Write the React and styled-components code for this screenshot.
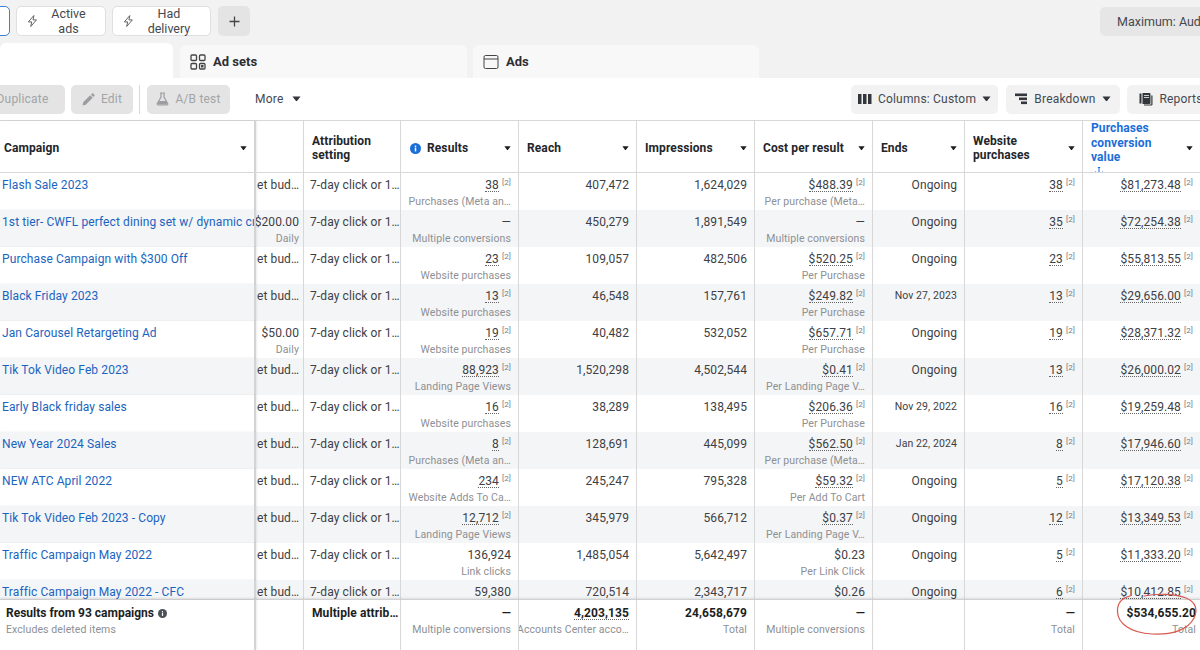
import React from "react";
import styled, { createGlobalStyle } from "styled-components";

const GlobalStyle = createGlobalStyle`
  html, body {
    margin: 0;
    padding: 0;
    width: 1200px;
    height: 650px;
    overflow: hidden;
    background: #fff;
    font-family: Roboto, "Liberation Sans", sans-serif;
    color: #1c1e21;
  }
  * { box-sizing: border-box; }
`;

const COLS = "256px 48px 97px 118px 118px 118px 118px 92px 118px 117px";

const Page = styled.div`
  position: relative;
  display: flex;
  flex-direction: column;
  width: 1200px;
  height: 650px;
  overflow: hidden;
`;

const TopArea = styled.div`
  display: flex;
  flex-direction: column;
  height: 78px;
  background: #f2f2f2;
`;

const FilterBar = styled.div`
  display: flex;
  align-items: center;
  gap: 6px;
  height: 45px;
  padding-bottom: 3px;
  margin-left: -40px;
`;

const FilterChip = styled.button`
  display: flex;
  align-items: center;
  gap: 4px;
  height: 30px;
  padding: 0 10px;
  border-radius: 5px;
  border: 1px solid ${(p) => (p.$selected ? "#3b82d6" : "#dddfe2")};
  background: #fff;
  font: 400 12.5px Roboto, sans-serif;
  color: #444950;
  width: ${(p) => p.$width}px;
`;

const PlusButton = styled.button`
  display: flex;
  align-items: center;
  justify-content: center;
  width: 32px;
  height: 30px;
  margin-left: 1px;
  border: none;
  border-radius: 5px;
  background: #e4e4e4;
  color: #444950;
`;

const MaxButton = styled.button`
  display: flex;
  align-items: center;
  gap: 7px;
  height: 29px;
  width: 130px;
  margin-left: auto;
  margin-right: -30px;
  padding: 0 10px;
  border: none;
  border-radius: 5px;
  background: #e6e6e6;
  font: 400 12.5px Roboto, sans-serif;
  color: #444950;
  white-space: nowrap;
`;

const TabBar = styled.div`
  display: flex;
  align-items: flex-end;
  height: 33px;
  gap: 6px;
`;

const Tab = styled.div`
  display: flex;
  align-items: center;
  gap: 7px;
  height: ${(p) => (p.$active ? 35 : 33)}px;
  width: ${(p) => p.$width}px;
  padding-left: 10px;
  margin-right: ${(p) => (p.$active ? 1 : 0)}px;
  border-radius: 6px 6px 0 0;
  background: ${(p) => (p.$active ? "#fff" : "#f8f8f8")};
  font-size: 13px;
  font-weight: 700;
  color: #2c2e33;
`;

const Toolbar = styled.div`
  display: flex;
  align-items: center;
  height: 43px;
  background: #fff;
  border-bottom: 1px solid #d8d8d8;
`;

const ToolButton = styled.button`
  display: flex;
  align-items: center;
  justify-content: center;
  gap: 6px;
  height: 29px;
  width: ${(p) => p.$width}px;
  margin-right: ${(p) => p.$gap ?? 6}px;
  border: none;
  border-radius: 5px;
  background: ${(p) => (p.$disabled ? "#e4e4e4" : "#f2f2f2")};
  font: 400 12px Roboto, sans-serif;
  letter-spacing: 0.2px;
  color: ${(p) => (p.$disabled ? "#a2a4a7" : "#444950")};
  white-space: nowrap;
  flex-shrink: 0;
`;

const ToolDivider = styled.div`
  width: 1px;
  height: 29px;
  margin-right: 7px;
  background: #d8d8d8;
`;

const MoreLabel = styled.div`
  display: flex;
  align-items: center;
  gap: 9px;
  margin-left: 19px;
  font-size: 12px;
  letter-spacing: 0.2px;
  color: #444950;
`;

const ToolRight = styled.div`
  display: flex;
  align-items: center;
  margin-left: auto;
  margin-right: -30px;
`;

const Row = styled.div`
  display: grid;
  grid-template-columns: ${COLS};
  flex-shrink: 0;
  height: ${(p) => p.$height}px;
  background: ${(p) => (p.$grey ? "#f4f5f6" : "#fff")};
`;

const HeadCell = styled.div`
  display: flex;
  align-items: center;
  gap: 6px;
  padding: 0 7px 0 ${(p) => p.$pad ?? 8}px;
  border-right: 1px solid #d8d8d8;
  font-size: 12px;
  font-weight: 700;
  line-height: 14.5px;
  letter-spacing: 0.1px;
  color: ${(p) => (p.$active ? "#1a6ed8" : "#23252a")};
  &:last-child { border-right: none; }
`;

const HeadLabel = styled.div`
  flex: 1;
  min-width: 0;
`;

const Divider = styled.div`
  height: 1px;
  background: #d8d8d8;
  flex-shrink: 0;
`;

const Body = styled.div`
  display: flex;
  flex-direction: column;
  height: 426px;
  overflow: hidden;
`;

const Cell = styled.div`
  display: flex;
  flex-direction: column;
  align-items: ${(p) => (p.$left ? "flex-start" : "flex-end")};
  padding: 5px 7px 0 ${(p) => p.$pad ?? 4}px;
  border-right: 1px solid #d8d8d8;
  min-width: 0;
  white-space: nowrap;
  overflow: hidden;
  &:last-child { border-right: none; }
`;

const FrozenCell = styled(Cell)`
  border-right: 2px solid #d4d4d4;
  box-shadow: 1px 0 2px rgba(0, 0, 0, 0.08);
`;

const FrozenHead = styled(HeadCell)`
  border-right: 2px solid #d4d4d4;
  box-shadow: 1px 0 2px rgba(0, 0, 0, 0.08);
`;

const CampaignLink = styled.span`
  font-size: 12px;
  line-height: 14px;
  letter-spacing: 0.1px;
  color: #1a64c0;
`;

const Value = styled.div`
  display: flex;
  align-items: flex-start;
  gap: 3px;
  font-size: ${(p) => (p.$small ? 10.5 : 12)}px;
  line-height: 14px;
  letter-spacing: 0.1px;
  font-weight: ${(p) => (p.$bold ? 700 : 400)};
  color: ${(p) => (p.$bold ? "#1c1e21" : "#3d4045")};
`;

const Dotted = styled.span`
  border-bottom: 1px dotted #666;
  line-height: 12px;
  margin-top: 1px;
`;

const Note = styled.sup`
  font-size: 8px;
  line-height: 10px;
  color: #77797d;
  vertical-align: baseline;
`;

const SubText = styled.div`
  margin-top: 3px;
  font-size: 10.5px;
  line-height: 13px;
  letter-spacing: 0.1px;
  color: #8d9094;
`;

const Footer = styled.div`
  display: grid;
  grid-template-columns: ${COLS};
  height: 51px;
  background: #fff;
  border-top: 1px solid #d0d0d0;
  box-shadow: 0 -1px 2px rgba(0, 0, 0, 0.1);
  position: relative;
`;

const FootTitle = styled.div`
  display: flex;
  align-items: center;
  gap: 4px;
  font-size: 12px;
  font-weight: 700;
  line-height: 14px;
  color: #1c1e21;
`;

const RedCircle = styled.svg`
  position: absolute;
  left: 1110px;
  top: 590px;
  width: 90px;
  height: 50px;
  pointer-events: none;
`;

const Caret = ({ color = "#1c1e21", size = 7 }) => (
  <svg width={size} height={size * 0.6} viewBox="0 0 10 6" style={{ flexShrink: 0 }}>
    <path d="M0.5 0.5h9L5.8 5.3a1 1 0 0 1-1.6 0z" fill={color} />
  </svg>
);

const Bolt = () => (
  <svg width="12" height="14" viewBox="0 0 12 14" fill="none" stroke="#555" strokeWidth="1" strokeLinejoin="round">
    <path d="M7.5 1 1.5 8h3.6l-1 5 6.2-7.2H6.6z" />
  </svg>
);

const GridIcon = () => (
  <svg width="16" height="16" viewBox="0 0 16 16" fill="none" stroke="#444" strokeWidth="1.3">
    <rect x="1" y="1" width="5.5" height="5.5" rx="1" />
    <rect x="9.5" y="1" width="5.5" height="5.5" rx="1" />
    <rect x="1" y="9.5" width="5.5" height="5.5" rx="1" />
    <rect x="9.5" y="9.5" width="5.5" height="5.5" rx="1" />
    <rect x="11" y="11" width="2.5" height="2.5" fill="#444" stroke="none" />
  </svg>
);

const AdIcon = () => (
  <svg width="16" height="16" viewBox="0 0 16 16" fill="none" stroke="#444" strokeWidth="1">
    <rect x="1" y="1.5" width="14" height="13" rx="1.5" />
    <path d="M1 5h14" />
  </svg>
);

const TableIcon = () => (
  <svg width="14" height="14" viewBox="0 0 14 14" fill="none" stroke="#444" strokeWidth="1.2">
    <rect x="1" y="1.5" width="12" height="11" rx="2" />
    <path d="M1 5h12M1 8.5h12M5 5v7.5M9 5v7.5" />
    <path d="M1 3.5h12" strokeWidth="2.5" />
  </svg>
);

const PencilIcon = () => (
  <svg width="13" height="13" viewBox="0 0 13 13" fill="#9b9da0">
    <path d="M0.5 12.5l.7-3.2 7-7 2.5 2.5-7 7zM9 1.6l1-1a1 1 0 0 1 1.300 0l1.100 1.100a1 1 0 0 1 0 1.300l-1 1z" />
  </svg>
);

const FlaskIcon = () => (
  <svg width="13" height="14" viewBox="0 0 13 14" fill="none" stroke="#9b9da0" strokeWidth="1.200">
    <path d="M4 1h5M5 1v4L1.300 11.500a1 1 0 0 0 .9 1.500h8.600a1 1 0 0 0 .9-1.500L8 5V1" />
    <path d="M3 9h7l1.500 3.500h-10z" fill="#9b9da0" stroke="none" />
  </svg>
);

const ColumnsIcon = () => (
  <svg width="14" height="12" viewBox="0 0 14 12" fill="#33363b">
    <rect x="0" y="1" width="3.500" height="10" />
    <rect x="5" y="1" width="3.500" height="10" />
    <rect x="10" y="1" width="3.500" height="10" />
  </svg>
);

const BreakdownIcon = () => (
  <svg width="13" height="12" viewBox="0 0 13 12" fill="#33363b">
    <rect x="0" y="0.500" width="12" height="2.600" />
    <rect x="4" y="4.500" width="8" height="2.600" />
    <rect x="6" y="8.500" width="6" height="2.600" />
  </svg>
);

const ReportsIcon = () => (
  <svg width="14" height="14" viewBox="0 0 14 14" fill="#33363b">
    <path d="M0.500 1.500h2v10h-2zM3.500 1h7a1 1 0 0 1 1 1v9a1 1 0 0 1-1 1h-7z" />
    <path d="M12.300 3.500h1.200v9a1 1 0 0 1-1 1H5v-1h7.300z" />
    <path d="M5 3.500h5M5 5.500h5" stroke="#f2f2f2" strokeWidth="0.800" />
  </svg>
);

const InfoIcon = ({ color, size = 11 }) => (
  <svg width={size} height={size} viewBox="0 0 12 12" style={{ flexShrink: 0 }}>
    <circle cx="6" cy="6" r="6" fill={color} />
    <rect x="5.200" y="5" width="1.600" height="4.200" fill="#fff" />
    <rect x="5.200" y="2.800" width="1.600" height="1.500" fill="#fff" />
  </svg>
);

const SortArrow = () => (
  <svg width="10" height="10" viewBox="0 0 10 10" fill="none" stroke="#1a6ed8" strokeWidth="1" style={{ display: "block", marginLeft: 3, marginTop: 1 }}>
    <path d="M5 1.500v7M1.500 5.500c0 2 1.500 3 3.500 3s3.500-1 3.500-3M3.800 1.500h2.400" />
  </svg>
);

const headers = [
  { label: "Attribution setting", pad: 8 },
  { label: "Results", pad: 9, info: true },
  { label: "Reach" },
  { label: "Impressions" },
  { label: "Cost per result" },
  { label: "Ends" },
  { label: "Website purchases" },
];

const rows = [
  { name: "Flash Sale 2023", res: "38", resSub: "Purchases (Meta an…", reach: "407,472", imp: "1,624,029", cost: "$488.39", costSub: "Per purchase (Meta…", ends: "Ongoing", web: "38", value: "$81,273.48" },
  { name: "1st tier- CWFL perfect dining set w/ dynamic cr…", budget: "$200.00", res: "—", resSub: "Multiple conversions", reach: "450,279", imp: "1,891,549", cost: "—", costSub: "Multiple conversions", ends: "Ongoing", web: "35", value: "$72,254.38" },
  { name: "Purchase Campaign with $300 Off", res: "23", resSub: "Website purchases", reach: "109,057", imp: "482,506", cost: "$520.25", costSub: "Per Purchase", ends: "Ongoing", web: "23", value: "$55,813.55" },
  { name: "Black Friday 2023", res: "13", resSub: "Website purchases", reach: "46,548", imp: "157,761", cost: "$249.82", costSub: "Per Purchase", ends: "Nov 27, 2023", web: "13", value: "$29,656.00" },
  { name: "Jan Carousel Retargeting Ad", budget: "$50.00", res: "19", resSub: "Website purchases", reach: "40,482", imp: "532,052", cost: "$657.71", costSub: "Per Purchase", ends: "Ongoing", web: "19", value: "$28,371.32" },
  { name: "Tik Tok Video Feb 2023", res: "88,923", resSub: "Landing Page Views", reach: "1,520,298", imp: "4,502,544", cost: "$0.41", costSub: "Per Landing Page V…", ends: "Ongoing", web: "13", value: "$26,000.02" },
  { name: "Early Black friday sales", res: "16", resSub: "Website purchases", reach: "38,289", imp: "138,495", cost: "$206.36", costSub: "Per Purchase", ends: "Nov 29, 2022", web: "16", value: "$19,259.48" },
  { name: "New Year 2024 Sales", res: "8", resSub: "Purchases (Meta an…", reach: "128,691", imp: "445,099", cost: "$562.50", costSub: "Per purchase (Meta…", ends: "Jan 22, 2024", web: "8", value: "$17,946.60" },
  { name: "NEW ATC April 2022", res: "234", resSub: "Website Adds To Ca…", reach: "245,247", imp: "795,328", cost: "$59.32", costSub: "Per Add To Cart", ends: "Ongoing", web: "5", value: "$17,120.38" },
  { name: "Tik Tok Video Feb 2023 - Copy", res: "12,712", resSub: "Landing Page Views", reach: "345,979", imp: "566,712", cost: "$0.37", costSub: "Per Landing Page V…", ends: "Ongoing", web: "12", value: "$13,349.53" },
  { name: "Traffic Campaign May 2022", res: "136,924", plain: true, resSub: "Link clicks", reach: "1,485,054", imp: "5,642,497", cost: "$0.23", costSub: "Per Link Click", ends: "Ongoing", web: "5", value: "$11,333.20" },
  { name: "Traffic Campaign May 2022 - CFC", res: "59,380", plain: true, reach: "720,514", imp: "2,343,717", cost: "$0.26", ends: "Ongoing", web: "6", value: "$10,412.85" },
];

const Metric = ({ value, plain }) => {
  if (plain || value === "—") return <Value>{value}</Value>;
  return (
    <Value>
      <Dotted>{value}</Dotted>
      <Note>[2]</Note>
    </Value>
  );
};

const TableRow = ({ row, grey }) => (
  <Row $height={37} $grey={grey}>
    <FrozenCell $left $pad={2}>
      <CampaignLink>{row.name}</CampaignLink>
    </FrozenCell>
    {row.budget ? (
      <Cell $pad={0} style={{ paddingRight: 4 }}>
        <Value>{row.budget}</Value>
        <SubText>Daily</SubText>
      </Cell>
    ) : (
      <Cell $left $pad={1}>
        <Value>et bud…</Value>
      </Cell>
    )}
    <Cell $left $pad={6}>
      <Value>7-day click or 1…</Value>
    </Cell>
    <Cell>
      <Metric value={row.res} plain={row.plain} />
      {row.resSub && <SubText>{row.resSub}</SubText>}
    </Cell>
    <Cell>
      <Value>{row.reach}</Value>
    </Cell>
    <Cell>
      <Value>{row.imp}</Value>
    </Cell>
    <Cell>
      <Metric value={row.cost} plain={row.plain} />
      {row.costSub && <SubText>{row.costSub}</SubText>}
    </Cell>
    <Cell>
      <Value $small={row.ends !== "Ongoing"}>{row.ends}</Value>
    </Cell>
    <Cell>
      <Metric value={row.web} />
    </Cell>
    <Cell>
      <Metric value={row.value} />
    </Cell>
  </Row>
);

export default function App() {
  return (
    <Page>
      <GlobalStyle />
      <TopArea>
        <FilterBar>
          <FilterChip $selected $width={50} />
          <FilterChip $width={90}>
            <Bolt />
            Active ads
          </FilterChip>
          <FilterChip $width={99}>
            <Bolt />
            Had delivery
          </FilterChip>
          <PlusButton>
            <svg width="11" height="11" viewBox="0 0 11 11" stroke="#444" strokeWidth="1.300">
              <path d="M5.500 0.500v10M0.500 5.500h10" />
            </svg>
          </PlusButton>
          <MaxButton>
            <TableIcon />
            Maximum: Audience
          </MaxButton>
        </FilterBar>
        <TabBar>
          <Tab $active $width={173} />
          <Tab $width={287}>
            <GridIcon />
            Ad sets
          </Tab>
          <Tab $width={286}>
            <AdIcon />
            Ads
          </Tab>
        </TabBar>
      </TopArea>
      <Toolbar>
        <ToolButton $disabled $width={85} style={{ marginLeft: -20 }}>
          Duplicate
        </ToolButton>
        <ToolButton $disabled $width={62}>
          <PencilIcon />
          Edit
        </ToolButton>
        <ToolDivider />
        <ToolButton $disabled $width={83}>
          <FlaskIcon />
          A/B test
        </ToolButton>
        <MoreLabel>
          More
          <Caret color="#33363b" size={9} />
        </MoreLabel>
        <ToolRight>
          <ToolButton $width={147} $gap={8}>
            <ColumnsIcon />
            Columns: Custom
            <Caret color="#33363b" size={9} />
          </ToolButton>
          <ToolButton $width={114} $gap={7}>
            <BreakdownIcon />
            Breakdown
            <Caret color="#33363b" size={9} />
          </ToolButton>
          <ToolButton $width={103} $gap={0}>
            <ReportsIcon />
            Reports
            <Caret color="#33363b" size={9} />
          </ToolButton>
        </ToolRight>
      </Toolbar>
      <Row $height={51}>
        <FrozenHead $pad={4}>
          <HeadLabel>Campaign</HeadLabel>
          <Caret />
        </FrozenHead>
        <HeadCell />
        {headers.map((h) => (
          <HeadCell key={h.label} $pad={h.pad}>
            {h.info && <InfoIcon color="#1a6ed8" />}
            <HeadLabel>{h.label}</HeadLabel>
            {h.label !== "Attribution setting" && <Caret />}
          </HeadCell>
        ))}
        <HeadCell $active>
          <HeadLabel>
            Purchases conversion value
            <SortArrow />
          </HeadLabel>
          <Caret />
        </HeadCell>
      </Row>
      <Divider />
      <Body>
        {rows.map((row, i) => (
          <TableRow key={row.name} row={row} grey={i % 2 === 1} />
        ))}
      </Body>
      <Footer>
        <FrozenCell $left $pad={6} style={{ paddingTop: 6 }}>
          <FootTitle>
            Results from 93 campaigns
            <InfoIcon color="#4b4f56" size={9} />
          </FootTitle>
          <SubText>Excludes deleted items</SubText>
        </FrozenCell>
        <Cell />
        <Cell $left $pad={8} style={{ paddingTop: 6 }}>
          <Value $bold>Multiple attrib…</Value>
        </Cell>
        <Cell style={{ paddingTop: 6 }}>
          <Value $bold>—</Value>
          <SubText>Multiple conversions</SubText>
        </Cell>
        <Cell style={{ paddingTop: 6 }}>
          <Value $bold>
            <Dotted>4,203,135</Dotted>
          </Value>
          <SubText>Accounts Center acco…</SubText>
        </Cell>
        <Cell style={{ paddingTop: 6 }}>
          <Value $bold>24,658,679</Value>
          <SubText>Total</SubText>
        </Cell>
        <Cell style={{ paddingTop: 6 }}>
          <Value $bold>—</Value>
          <SubText>Multiple conversions</SubText>
        </Cell>
        <Cell />
        <Cell style={{ paddingTop: 6 }}>
          <Value $bold>—</Value>
          <SubText>Total</SubText>
        </Cell>
        <Cell style={{ paddingTop: 6, paddingRight: 4 }}>
          <Value $bold>$534,655.20</Value>
          <SubText>Total</SubText>
        </Cell>
      </Footer>
      <RedCircle viewBox="0 0 90 50" fill="none" stroke="#d9574e" strokeWidth="1.200" strokeLinecap="round">
        <path d="M20 6C12 8 7 13 7.500 22C8 33 20 43 42 44C62 45 78 40 84 28C88 20 86 12 76 8C66 4 48 3 34 6" />
      </RedCircle>
    </Page>
  );
}
